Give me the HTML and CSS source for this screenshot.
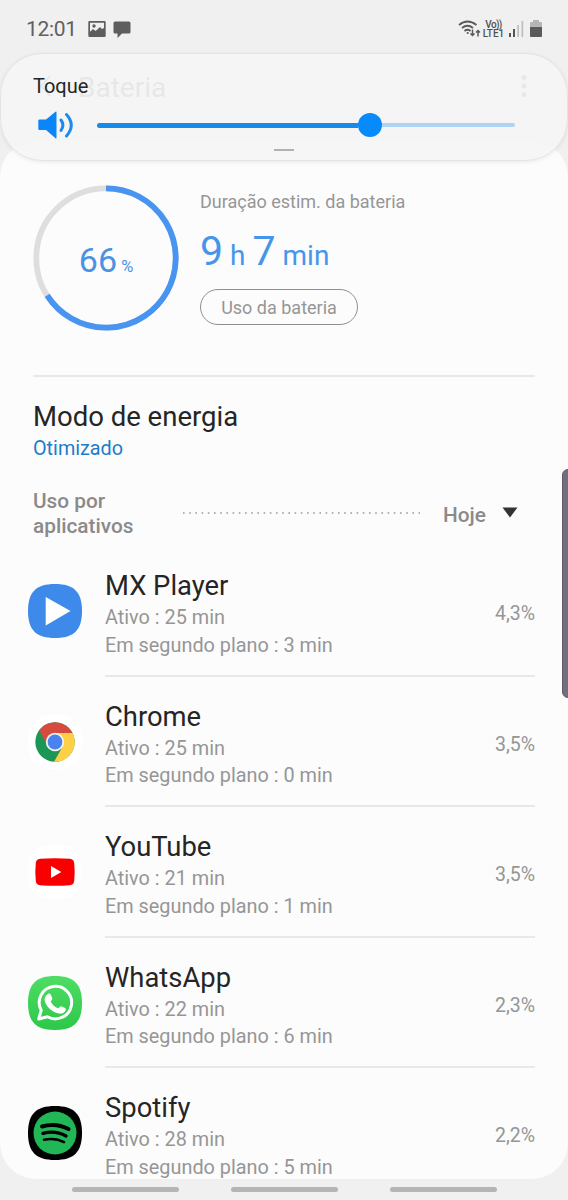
FILE: index.html
```html
<!DOCTYPE html>
<html lang="pt-BR">
<head>
<meta charset="utf-8">
<title>Bateria</title>
<link rel="stylesheet" href="styles.css">
</head>
<body>
<div class="screen">
  <div class="statusbar">
    <span class="clock">12:01</span>
    <svg class="st-image" width="18" height="16" viewBox="0 0 18 16"><path fill="#5e5e5e" fill-rule="evenodd" d="M1.500 0h15A1.200 1.200 0 0 1 17.700 1.200v13.600a1.200 1.200 0 0 1-1.200 1.200h-15a1.200 1.200 0 0 1-1.200-1.200V1.200A1.200 1.200 0 0 1 1.500 0zM2 1.700v9l3-2.700 2.700 2 4.300-4 1.800 2 2.200-1V1.700z"/><circle cx="6" cy="5" r="1.700" fill="#5e5e5e"/></svg>
    <svg class="st-chat" width="18" height="18" viewBox="0 0 18 18"><path fill="#5e5e5e" d="M2 .5h14a1.500 1.500 0 0 1 1.500 1.500v9a1.500 1.500 0 0 1-1.500 1.500H9L4.500 17v-4.500H2A1.500 1.500 0 0 1 .5 11V2A1.500 1.500 0 0 1 2 .5z"/></svg>
    <span class="spacer"></span>
    <svg class="st-wifi" width="23" height="18" viewBox="0 0 23 18" fill="none" stroke="#5a5a5a"><path stroke-width="1.700" d="M1 5Q9.500-2 18.500 5M4 8Q9.500 3.500 15 8M6.500 11Q9.500 8.500 12.500 11"/><circle cx="9.700" cy="13" r="1.100" fill="#5a5a5a" stroke="none"/><path stroke-width="1.500" d="M14.500 9.500v6M12.500 13.500l2 2 2-2M20 16.500v-6M18 12.500l2-2 2 2"/></svg>
    <span class="volte"><span class="vo">Vo))</span><span>LTE1</span></span>
    <svg class="st-signal" width="16" height="16" viewBox="0 0 16 16"><path fill="#555" d="M1 12h2v4H1zM5 8h2v8H5z"/><path fill="#bdbdbd" d="M9.300 4h1.700v12H9.300zM13.500 0h1.700v16h-1.700z"/></svg>
    <svg class="st-batt" width="12" height="17" viewBox="0 0 12 17"><path fill="#b5b5b5" d="M3 0h6v2h2q1 0 1 1v4H0V3q0-1 1-1h2z"/><path fill="#5a5a5a" d="M0 7h12v9q0 1-1 1H1q-1 0-1-1z"/></svg>
  </div>

  <div class="header">
    <svg width="14" height="24" viewBox="0 0 14 24"><path d="M12 2L3 12l9 10" fill="none" stroke="#555" stroke-width="2"/></svg>
    <span class="header-title">Bateria</span>
    <svg class="more" width="6" height="24" viewBox="0 0 6 24"><g fill="#555"><circle cx="3" cy="3.500" r="2.500"/><circle cx="3" cy="12" r="2.500"/><circle cx="3" cy="20.500" r="2.500"/></g></svg>
  </div>

  <main class="card">
    <section class="summary">
      <div class="ring">
        <svg width="146" height="146" viewBox="0 0 146 146" fill="none" stroke-width="5.800"><circle cx="73" cy="73" r="69.700" stroke="#dedede"/><path d="M73 3.300A69.700 69.700 0 1 1 14.150 110.350" stroke="#4795f1"/></svg>
        <span class="ring-label"><span class="ring-num">66</span><span class="ring-pct">%</span></span>
      </div>
      <div class="estimate">
        <div class="est-title">Duração estim. da bateria</div>
        <div class="est-time"><b>9</b><span class="u-h">h</span><b>7</b><span class="u-m">min</span></div>
        <div class="pill">Uso da bateria</div>
      </div>
    </section>

    <section class="mode">
      <div class="mode-title">Modo de energia</div>
      <div class="mode-value">Otimizado</div>
    </section>

    <section class="usage-head">
      <div class="usage-title">Uso por<br>aplicativos</div>
      <svg class="dots" width="238" height="4" viewBox="0 0 238 4"><path d="M0 2h237" stroke="#999" stroke-width="1.600" stroke-dasharray="1.600 4.600"/></svg>
      <div class="period">Hoje</div>
      <svg width="16" height="11" viewBox="0 0 16 11"><path d="M.5.500h15L8 10.500z" fill="#333"/></svg>
    </section>

    <section class="apps">
      <div class="app">
        <svg class="app-icon" width="56" height="56" viewBox="0 0 56 56"><path fill="#3e8aea" d="M28 1C47 1 55 9 55 28S47 55 28 55 1 47 1 28 9 1 28 1z"/><path fill="#fff" d="M18.700 14v28.500L43.500 28z"/></svg>
        <div class="app-body"><div class="app-info"><div class="app-name">MX Player</div><div class="app-sub">Ativo : 25 min</div><div class="app-sub">Em segundo plano : 3 min</div></div><div class="app-pct">4,3%</div></div>
      </div>
      <div class="app">
        <svg class="app-icon" width="56" height="56" viewBox="0 0 56 56"><path fill="#fff" d="M28 1C47 1 55 9 55 28S47 55 28 55 1 47 1 28 9 1 28 1z"/><circle cx="28" cy="28" r="19.700" fill="#1b9655"/><path fill="#d74a3e" d="M12.200 16.300A19.700 19.700 0 0 1 45.500 19H28v9l-8.500 2z"/><path fill="#ffd045" d="M28 19h17.500A19.700 19.700 0 0 1 27 47.700L36 32z"/><circle cx="28" cy="28" r="9.200" fill="#f3f3f3"/><circle cx="28" cy="28" r="7.400" fill="#4a83ed"/></svg>
        <div class="app-body"><div class="app-info"><div class="app-name">Chrome</div><div class="app-sub">Ativo : 25 min</div><div class="app-sub">Em segundo plano : 0 min</div></div><div class="app-pct">3,5%</div></div>
      </div>
      <div class="app">
        <svg class="app-icon" width="56" height="56" viewBox="0 0 56 56"><path fill="#fff" d="M28 1C47 1 55 9 55 28S47 55 28 55 1 47 1 28 9 1 28 1z"/><path fill="#f80000" d="M28 14.200q9 0 15 .6 3.800.4 4.200 4.200 1 9 0 18-.4 3.800-4.200 4.200-15 1.200-30 0-3.800-.4-4.200-4.200-1-9 0-18 .4-3.800 4.200-4.200 6-.6 15-.6z"/><path fill="#fff" d="M24 22v12l10.300-6z"/></svg>
        <div class="app-body"><div class="app-info"><div class="app-name">YouTube</div><div class="app-sub">Ativo : 21 min</div><div class="app-sub">Em segundo plano : 1 min</div></div><div class="app-pct">3,5%</div></div>
      </div>
      <div class="app">
        <svg class="app-icon" width="56" height="56" viewBox="0 0 56 56"><defs><linearGradient id="wa" x2="0" y2="1"><stop stop-color="#4fdd65"/><stop offset="1" stop-color="#2cc84a"/></linearGradient></defs><path fill="url(#wa)" d="M28 1C47 1 55 9 55 28S47 55 28 55 1 47 1 28 9 1 28 1z"/><path fill="none" stroke="#fff" stroke-width="3" stroke-linejoin="round" d="M11.700 44l2.500-8.700A16.200 16.200 0 1 1 20.500 41.700z"/><path fill="#fff" d="M20.500 19.200c1-.8 2.600-.9 3.200.3l1.600 3.800c.5 1.300-1.800 2.700-1.500 3.500 1.500 3 3.900 5.200 7.100 6.500 1 .4 2.200-2.500 3.300-2.100l4 1.900c1.100.6.6 2.700-.3 3.700-2 2.100-4.700 2.200-7.300 1.400-6.200-2-10.200-5.600-12.600-11.300-1-3-.1-5.800 2.500-7.700z"/></svg>
        <div class="app-body"><div class="app-info"><div class="app-name">WhatsApp</div><div class="app-sub">Ativo : 22 min</div><div class="app-sub">Em segundo plano : 6 min</div></div><div class="app-pct">2,3%</div></div>
      </div>
      <div class="app">
        <svg class="app-icon" width="56" height="56" viewBox="0 0 56 56"><path fill="#000" d="M28 1C47 1 55 9 55 28S47 55 28 55 1 47 1 28 9 1 28 1z"/><circle cx="28" cy="28" r="21.500" fill="#21b757"/><g fill="none" stroke="#000" stroke-linecap="round"><path stroke-width="4" d="M15 21.500Q29 17.500 41.500 24"/><path stroke-width="3.400" d="M16 28.300Q28.500 25 39 31"/><path stroke-width="2.600" d="M17 34.800Q28 32.300 37 37.200"/></g></svg>
        <div class="app-body"><div class="app-info"><div class="app-name">Spotify</div><div class="app-sub">Ativo : 28 min</div><div class="app-sub">Em segundo plano : 5 min</div></div><div class="app-pct">2,2%</div></div>
      </div>
    </section>
  </main>

  <nav class="navbar"><i></i><i></i><i></i></nav>

  <aside class="volume">
    <div class="vol-title">Toque</div>
    <div class="vol-row">
      <svg width="36" height="28" viewBox="0 0 36 28"><path fill="#0a86fa" d="M1.500 8.500H8L17.500.8q1-.7 1 .5v25.500q0 1.200-1 .5L8 19H1.500Q.3 19 .3 17.800V9.700q0-1.200 1.200-1.200z"/><path fill="none" stroke="#1d8af0" stroke-width="3" stroke-linecap="round" d="M23 9q3.800 5 0 10.500M28.500 3.500q9.500 10.500 0 21.500"/></svg>
      <div class="slider"><div class="fill"></div><div class="thumb"></div><div class="rest"></div></div>
    </div>
    <div class="grip"></div>
  </aside>
  <div class="edge"></div>
</div>
</body>
</html>
```
FILE: styles.css
```css
* { box-sizing: border-box; }
body { margin: 0; font-family: Roboto, sans-serif; }
svg { display: block; flex: none; }
.screen { position: relative; width: 568px; height: 1200px; overflow: hidden; background: #f0f0f0; display: flex; flex-direction: column; }

.statusbar { height: 56px; flex: none; display: flex; align-items: center; padding: 1px 26px 0 26px; color: #606060; }
.clock { font-size: 21px; line-height: 26px; width: 62px; letter-spacing: -.3px; }
.st-chat { margin: 2px 0 0 7px; }
.spacer { flex: 1; }
.st-wifi { margin-right: 1px; }
.volte { display: flex; flex-direction: column; align-items: center; width: 23px; font-size: 10px; line-height: 9px; font-weight: 500; color: #505050; }
.vo { letter-spacing: -.6px; }
.st-signal { margin-left: 3px; }
.st-batt { margin-left: 6px; }

.header { height: 85px; flex: none; display: flex; align-items: flex-start; padding: 18px 41px 0 38px; color: #444; }
.header-title { font-size: 28px; line-height: 28px; margin-left: 26px; flex: 1; }

.card { height: 1038px; flex: none; overflow: hidden; border-radius: 36px; background: #fcfcfc; padding: 44px 33px 0; }
.summary { height: 192px; display: flex; border-bottom: 2px solid #e8e8e8; }
.ring { display: grid; width: 146px; height: 146px; }
.ring > * { grid-area: 1 / 1; }
.ring-label { display: flex; align-items: baseline; justify-content: center; padding-top: 55px; color: #4c92e2; }
.ring-num { font-size: 34px; line-height: 40px; letter-spacing: .2px; }
.ring-pct { font-size: 16.500px; margin-left: 4px; }
.estimate { margin-left: 21px; color: #969696; }
.est-title { font-size: 18px; line-height: 24px; padding-top: 5px; }
.est-time { display: flex; align-items: baseline; height: 58px; padding-top: 13px; line-height: 48px; color: #4795ea; font-size: 28px; }
.est-time b { font-weight: 400; font-size: 41px; }
.u-h { margin: 0 7px; }
.u-m { margin-left: 7px; }
.pill { width: 158px; height: 36px; margin-top: 17px; border: 1.500px solid #8f8f8f; border-radius: 18px; text-align: center; font-size: 18px; line-height: 35px; }

.mode { height: 104px; padding-top: 21px; }
.mode-title { font-size: 27.500px; line-height: 37px; color: #252525; }
.mode-value { font-size: 19.800px; line-height: 28px; color: #1d7cc9; }

.usage-head { height: 65px; display: flex; align-items: flex-start; padding-top: 8px; font-weight: 500; color: #8a8a8a; }
.usage-title { width: 150px; font-size: 20.800px; line-height: 24.500px; }
.dots { margin-top: 22px; }
.period { width: 59px; margin-left: 22px; padding-top: 13px; font-size: 20.800px; line-height: 26px; }
.usage-head svg:last-child { margin-top: 18px; }

.app { height: 130.500px; display: flex; align-items: center; }
.app-icon { margin: 0 22px 0 -6px; }
.app-body { flex: 1; height: 130.500px; display: flex; align-items: center; padding-top: 7px; border-bottom: 2px solid #e8e8e8; }
.app-info { flex: 1; }
.app-name { font-size: 27.400px; line-height: 36px; color: #252525; }
.app-sub { font-size: 19.850px; line-height: 27.400px; color: #969696; }
.app-pct { font-size: 19.500px; color: #969696; }

.navbar { flex: 1; display: flex; justify-content: center; gap: 52px; padding-top: 8px; }
.navbar i { width: 107px; height: 5px; border-radius: 3px; background: #b5b5b5; }

.volume { position: absolute; left: 0; top: 53px; width: 568px; height: 108px; border-radius: 42px; border: 1px solid #e4e4e4; background: rgba(245, 245, 245, .92); box-shadow: 0 1px 4px rgba(0, 0, 0, .08); padding: 19px 33px 0 32px; }
.vol-title { font-size: 20px; line-height: 26px; color: #252525; }
.vol-row { display: flex; align-items: center; margin-top: 12px; padding-left: 5px; }
.slider { flex: 1; display: flex; align-items: center; margin: 0 19px 0 23px; }
.fill { width: 261px; height: 5px; border-radius: 3px 0 0 3px; background: #168be8; }
.thumb { width: 24px; height: 24px; border-radius: 50%; background: #078afc; }
.rest { flex: 1; height: 4px; border-radius: 0 2px 2px 0; background: #afd3f2; }
.grip { width: 20px; height: 2px; margin: 10px auto 0; background: #b2b2b2; }
.edge { position: absolute; right: -6px; top: 469px; width: 12px; height: 229px; border: 1px solid #5f5c68; border-radius: 6px; background: #726f7c; }
```
